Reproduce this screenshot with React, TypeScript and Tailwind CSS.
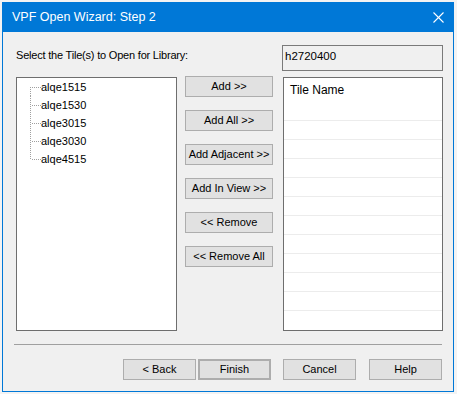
import React from "react";

const tiles = ["alqe1515", "alqe1530", "alqe3015", "alqe3030", "alqe4515"];
const sideButtons = ["Add >>", "Add All >>", "Add Adjacent >>", "Add In View >>", "<< Remove", "<< Remove All"];

function TreeRow({ label, first, last }: { label: string; first: boolean; last: boolean }) {
  return (
    <div className="flex h-[18px] items-center pl-[13px]">
      {/* dotted tree connector */}
      <svg width="11" height="18" className="shrink-0">
        <line x1="0.5" y1={first ? 9 : 0} x2="0.5" y2={last ? 10 : 18} stroke="#a0a0a0" strokeDasharray="1 1" />
        <line x1="2" y1="9.5" x2="11" y2="9.5" stroke="#a0a0a0" strokeDasharray="1 1" />
      </svg>
      <span className="text-[11px] leading-[13px] text-black">{label}</span>
    </div>
  );
}

function WinButton({ label, className = "" }: { label: string; className?: string }) {
  return (
    <button
      className={`flex h-[21px] items-center justify-center border border-[#adadad] bg-[#e1e1e1] text-[11px] leading-[13px] text-black ${className}`}
    >
      {label}
    </button>
  );
}

export default function App() {
  return (
    <div className="h-[394px] w-[457px] bg-[#f3f3f3] pl-[2px] pt-[2px] font-['Liberation_Sans',Arial,sans-serif]">
      <div className="flex h-[390px] w-[452px] flex-col border-x border-b border-[#0078d7] bg-[#f0f0f0]">
        {/* Title bar */}
        <div className="flex h-[30px] shrink-0 items-center bg-[#0078d7] pl-[9px] pr-[9px]">
          <span className="text-[12.5px] leading-[15px] text-white">VPF Open Wizard: Step 2</span>
          <svg width="11" height="11" className="ml-auto">
            <line x1="0.5" y1="0.5" x2="10.5" y2="10.5" stroke="white" strokeWidth="1.1" />
            <line x1="10.5" y1="0.5" x2="0.5" y2="10.5" stroke="white" strokeWidth="1.1" />
          </svg>
        </div>

        {/* Client area */}
        <div className="flex flex-col pl-[13px] pr-[10px]">
          <div className="mt-[13px] flex h-[26px]">
            <span className="mt-[4px] text-[11px] leading-[13px] tracking-[-0.2px] text-black">
              Select the Tile(s) to Open for Library:
            </span>
            <div className="ml-auto h-[26px] w-[161px] border border-[#7a7a7a] bg-[#f0f0f0] pl-[2px] pt-[4px] text-[11.5px] leading-[13px] text-black">
              h2720400
            </div>
          </div>

          <div className="mt-[6px] flex h-[254px]">
            <div className="h-[254px] w-[161px] border border-[#6e6e6e] bg-white">
              {tiles.map((t, i) => (
                <TreeRow key={t} label={t} first={i === 0} last={i === tiles.length - 1} />
              ))}
            </div>

            <div className="-mt-px ml-[8px] flex w-[88px] flex-col gap-[13px]">
              {sideButtons.map((b) => (
                <WinButton key={b} label={b} className="w-[88px]" />
              ))}
            </div>

            <div className="ml-[10px] h-[254px] w-[160px] border border-[#6e6e6e] bg-white">
              <div className="h-[42px] pl-[6px] pt-[5px] text-[12px] leading-[14px] text-black">Tile Name</div>
              {Array.from({ length: 11 }).map((_, i) => (
                <div key={i} className="h-[19px] border-t border-[#ececec]" />
              ))}
            </div>
          </div>

          <div className="-ml-[2px] mt-[13px] h-px w-[428px] bg-[#a0a0a0]" />

          <div className="mt-[14px] flex justify-end pr-[1px]">
            <WinButton label="< Back" className="w-[73px]" />
            <WinButton label="Finish" className="ml-[2px] w-[73px] border-2 border-[#0078d7]" />
            <WinButton label="Cancel" className="ml-[12px] w-[73px]" />
            <WinButton label="Help" className="ml-[13px] w-[73px]" />
          </div>
        </div>
      </div>
    </div>
  );
}
